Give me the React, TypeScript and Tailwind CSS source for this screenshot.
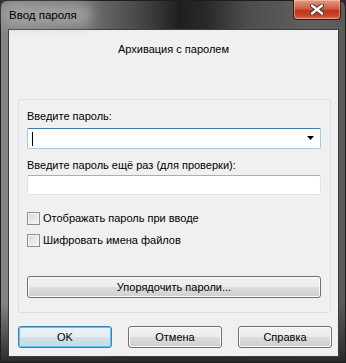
import React from "react";

const font = { fontFamily: '"Liberation Sans", Arial, sans-serif' };

function Checkbox({ label }: { label: string }) {
  return (
    <div className="flex h-[15px] items-center">
      <div className="h-[13px] w-[13px] border border-[#8e8f8f] bg-[linear-gradient(135deg,#d8d8d8,#f6f6f6)] shadow-[inset_0_0_0_1px_#f4f4f4]" />
      <span className="ml-[3px] text-[11px] leading-[15px] text-black">{label}</span>
    </div>
  );
}

function Btn({ label, def, className = "" }: { label: string; def?: boolean; className?: string }) {
  return (
    <div
      className={
        "flex h-[22px] items-center justify-center rounded-[3px] border text-[11px] leading-[15px] text-black " +
        (def
          ? "border-[#3c7fb1] bg-[linear-gradient(#eaf3f8_0%,#e3edf3_50%,#d3e2eb_50%,#c6d8e3_100%)] shadow-[inset_0_0_0_1px_#5cc8f2] "
          : "border-[#707070] bg-[linear-gradient(#f2f2f2_0%,#ebebeb_50%,#dddddd_50%,#cfcfcf_100%)] shadow-[inset_0_0_0_1px_#fbfbfb] ") +
        className
      }
    >
      {label}
    </div>
  );
}

export default function App() {
  return (
    <div
      className="relative h-[363px] w-[346px] overflow-hidden bg-[#2a2a2a]"
      style={font}
    >
      <div className="absolute inset-0 rounded-t-[7px] border border-[#1e1e1e] bg-[linear-gradient(90deg,#858585_0%,#727272_25%,#484848_40%,#1f1f1f_52%,#2a2a2a_60%,#4e4e4e_72%,#606060_90%,#5a5a5a_100%)]">
        <div className="absolute inset-x-0 bottom-0 h-[60px] bg-[linear-gradient(transparent,#2a2a2a)]" />
      </div>
      <div className="relative flex h-full flex-col">
        {/* title bar */}
        <div className="relative flex h-[29px] shrink-0 items-start pl-[9px] pt-[7px]">
          <div className="absolute left-[2px] top-[3px] h-[24px] w-[90px] rounded-full bg-[#b5b5b5] opacity-60 blur-[6px]" />
          <span className="relative text-[11.5px] leading-[16px] text-black">Ввод пароля</span>
          <div className="absolute right-[5px] top-0 flex h-[20px] w-[48px] items-center justify-center rounded-b-[4px] border border-t-0 border-[#3a1a14] bg-[linear-gradient(#e59a86_0%,#cf5c42_45%,#c0381c_55%,#c44226_80%,#dc6e4e_100%)] shadow-[inset_0_0_0_1px_rgba(255,220,210,0.45)]">
            <svg width="14" height="11" viewBox="0 0 14 11">
              <path
                d="M2 1.5 L12 9.5 M12 1.5 L2 9.5"
                stroke="#3a2a2a"
                strokeWidth="4.2"
                strokeLinecap="round"
              />
              <path
                d="M2 1.5 L12 9.5 M12 1.5 L2 9.5"
                stroke="#ffffff"
                strokeWidth="2.4"
                strokeLinecap="round"
              />
            </svg>
          </div>
        </div>
        {/* client */}
        <div className="ml-[8px] mr-[7px] flex h-[328px] flex-col border border-[#3e3e3e] bg-[#f0f0f0]">
          <div className="mt-[12px] h-[15px] text-center text-[11px] leading-[15px] text-black">
            Архивация с паролем
          </div>
          <div className="ml-[9px] mr-[7px] mt-[42px] flex flex-col rounded-[3px] border border-[#d5dfe5] pb-[14px] pl-[8px] pr-[9px] pt-[9px]">
            <div className="h-[15px] text-[11px] leading-[15px] text-black">Введите пароль:</div>
            <div className="mt-[4px] flex h-[21px] items-center justify-between rounded-[2px] border border-[#a9c8e4] border-t-[#3d7bad] bg-white pl-[4px] pr-[4px]">
              <div className="h-[14px] w-[1px] bg-black" />
              <svg width="8" height="5" viewBox="0 0 8 5" className="mr-[1px]">
                <path d="M0 0 H7 L3.5 4 Z" fill="#000" />
              </svg>
            </div>
            <div className="mt-[9px] h-[15px] text-[11px] leading-[15px] text-black">
              Введите пароль ещё раз (для проверки):
            </div>
            <div className="mt-[2px] h-[20px] rounded-[2px] border border-[#e2e3ea] border-t-[#abadb3] bg-white" />
            <div className="mt-[16px]">
              <Checkbox label="Отображать пароль при вводе" />
            </div>
            <div className="mt-[7px]">
              <Checkbox label="Шифровать имена файлов" />
            </div>
            <Btn label="Упорядочить пароли..." className="mt-[28px] h-[21px]" />
          </div>
          <div className="ml-[9px] mt-[13px] flex gap-[16px]">
            <Btn label="OK" def className="w-[94px]" />
            <Btn label="Отмена" className="w-[94px]" />
            <Btn label="Справка" className="w-[94px]" />
          </div>
        </div>
      </div>
    </div>
  );
}
